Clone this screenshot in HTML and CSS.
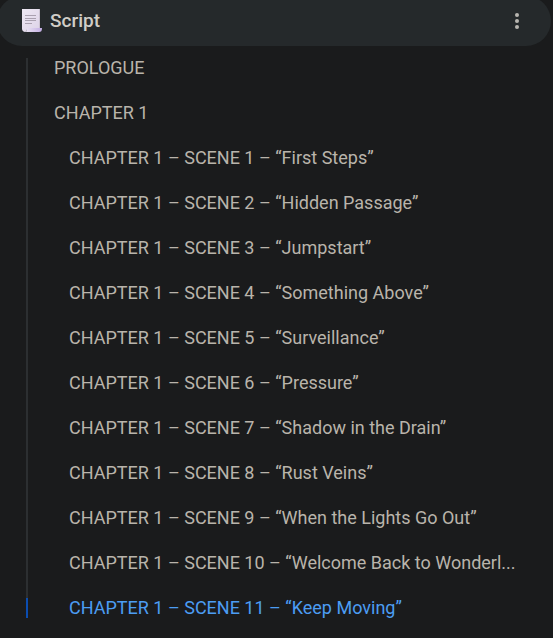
FILE: index.html
```html
<!DOCTYPE html>
<html lang="en">
<head>
<meta charset="utf-8">
<meta name="viewport" content="width=device-width, initial-scale=1">
<title>Script</title>
<link rel="stylesheet" href="styles.css">
</head>
<body>
<header class="tab">
  <svg class="tab-icon" viewBox="0 0 22 24" aria-hidden="true">
    <defs>
      <linearGradient id="paper" x1="0" y1="0" x2="1" y2="1">
        <stop offset="0" stop-color="#eee8f3"/>
        <stop offset="1" stop-color="#ddd3e8"/>
      </linearGradient>
      <linearGradient id="curl" x1="0" y1="0" x2="1" y2="0">
        <stop offset="0" stop-color="#ece6f3"/>
        <stop offset="1" stop-color="#c3aee4"/>
      </linearGradient>
    </defs>
    <path d="M1 0h17v20H6c0 2-1 3-2 3s-3-1-3-3z" fill="url(#paper)"/>
    <path d="M18 0h1v19h-1z" fill="#cbc2d1"/>
    <path d="M6 19h15c0 3-1 4-3 4H4c1 0 2-1 2-4z" fill="url(#curl)"/>
    <path d="M4 6.500h11M4 9.500h11M4 11.500h11M4 14.500h7" stroke="#aaa1b0" fill="none"/>
  </svg>
  <h1 class="tab-title">Script</h1>
  <button class="tab-menu" type="button" aria-label="Tab options">
    <svg class="dots" viewBox="0 0 4 16" aria-hidden="true">
      <circle cx="2" cy="2" r="2"/><circle cx="2" cy="8" r="2"/><circle cx="2" cy="14" r="2"/>
    </svg>
  </button>
</header>
<nav class="outline" aria-label="Outline">
  <a class="item" href="#">PROLOGUE</a>
  <a class="item" href="#">CHAPTER 1</a>
  <a class="item scene" href="#">CHAPTER 1 – SCENE 1 – “First Steps”</a>
  <a class="item scene" href="#">CHAPTER 1 – SCENE 2 – “Hidden Passage”</a>
  <a class="item scene" href="#">CHAPTER 1 – SCENE 3 – “Jumpstart”</a>
  <a class="item scene" href="#">CHAPTER 1 – SCENE 4 – “Something Above”</a>
  <a class="item scene" href="#">CHAPTER 1 – SCENE 5 – “Surveillance”</a>
  <a class="item scene" href="#">CHAPTER 1 – SCENE 6 – “Pressure”</a>
  <a class="item scene" href="#">CHAPTER 1 – SCENE 7 – “Shadow in the Drain”</a>
  <a class="item scene" href="#">CHAPTER 1 – SCENE 8 – “Rust Veins”</a>
  <a class="item scene" href="#">CHAPTER 1 – SCENE 9 – “When the Lights Go Out”</a>
  <a class="item scene" href="#">CHAPTER 1 – SCENE 10 – “Welcome Back to Wonderl...</a>
  <a class="item scene current" href="#" aria-current="true">CHAPTER 1 – SCENE 11 – “Keep Moving”</a>
</nav>
</body>
</html>
```
FILE: styles.css
```css
* {
  box-sizing: border-box;
}

body {
  margin: 0;
  background: #1a1b1c;
  color: #b9b4ab;
  font-family: Roboto, "Liberation Sans", sans-serif;
  font-size: 18px;
  line-height: 20px;
}

.tab {
  display: flex;
  align-items: center;
  margin: -4px 2px 0 -3px;
  padding: 13px 24px 13px;
  border-radius: 25px;
  background: #25292b;
}

.tab-icon {
  width: 22px;
  height: 24px;
}

.tab-title {
  flex: 1;
  margin: 0 0 0 7px;
  color: #d0cdc7;
  font-size: 19px;
  font-weight: 500;
}

.tab-menu {
  display: flex;
  justify-content: center;
  width: 20px;
  padding: 0;
  border: 0;
  background: none;
}

.dots {
  width: 4px;
  height: 16px;
  fill: #b8b5b0;
}

.outline {
  display: flex;
  flex-direction: column;
  gap: 25px;
  margin: 12px 26px 20px;
  background: linear-gradient(#2c2f31, #2c2f31) left / 2px 100% no-repeat;
}

.item {
  padding-left: 28px;
  color: inherit;
  text-decoration: none;
  white-space: nowrap;
}

.scene {
  padding-left: 43px;
}

.current {
  padding-left: 41px;
  border-left: 2px solid #0b4db0;
  color: #4c9df3;
}
```
